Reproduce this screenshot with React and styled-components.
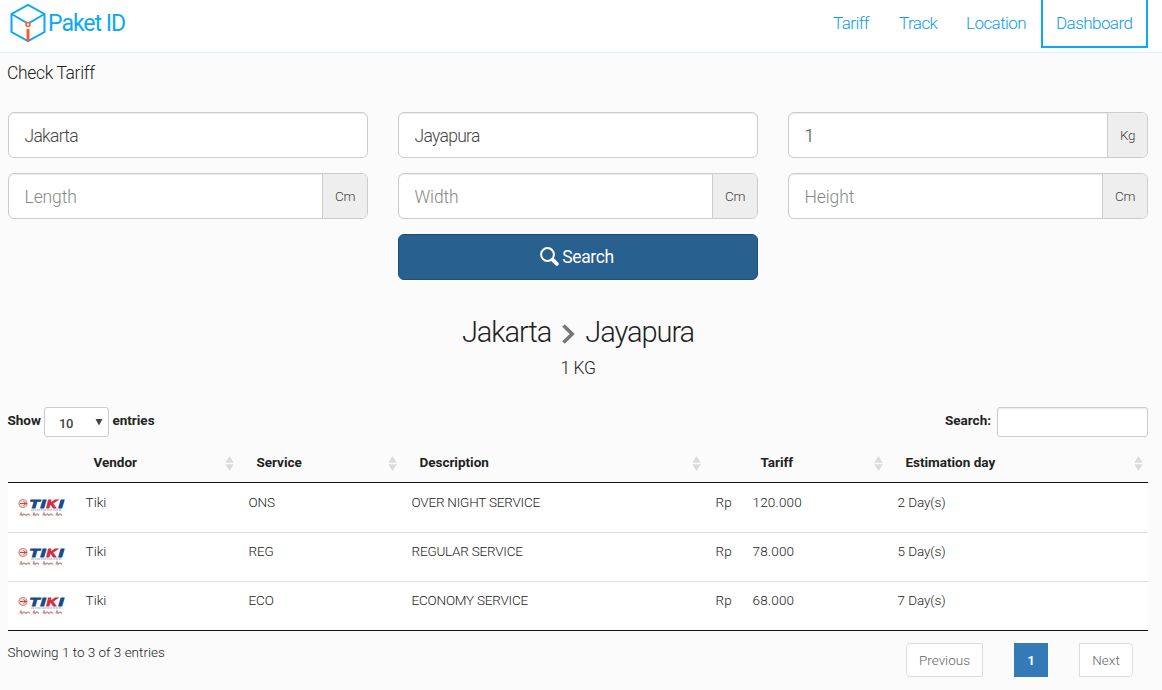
import React from "react";
import styled, { createGlobalStyle } from "styled-components";

const Global = createGlobalStyle`
  * { box-sizing: border-box; }
  body {
    margin: 0;
    background: #fbfbfb;
    color: #222;
    font: 300 13.5px/20px Roboto, "Open Sans", sans-serif;
    overflow: hidden;
  }
  button, input { font-family: inherit; }
`;

const Page = styled.div`height: 690px; overflow: hidden;`;

const Header = styled.header`
  display: flex;
  justify-content: space-between;
  height: 53px;
  padding: 0 14px 0 9px;
  background: #fff;
  border-bottom: 1px solid #dff0ff;
`;

const Brand = styled.a`
  display: flex;
  gap: 1px;
  color: #0aa8f5;
  font-size: 23px;
  font-weight: 400;
  line-height: 47px;
  letter-spacing: -1px;
  svg { margin-top: 3px; }
`;

const Nav = styled.nav`display: flex;`;

const NavLink = styled.a`
  width: ${(p) => p.$w}px;
  height: 48px;
  padding-left: ${(p) => (p.$boxed ? 13 : 15)}px;
  border: 2px solid #0aa8f5;
  border-width: ${(p) => (p.$boxed ? "0 2px 2px" : 0)};
  color: #0a9cf0;
  font-size: 17px;
  line-height: 46px;
  white-space: nowrap;
  letter-spacing: -0.55px;
`;

const Title = styled.h1`
  margin: 0;
  padding: 8px 7px 0;
  height: 59px;
  font-size: 17.5px;
  font-weight: 300;
  line-height: 24px;
  letter-spacing: -0.35px;
`;

const Form = styled.form`
  display: grid;
  grid-template-columns: repeat(3, 360px);
  gap: 15px 30px;
  padding: 0 8px;
`;

const Group = styled.label`
  display: flex;
  height: 46px;
  background: #fff;
  border: 1px solid #ccc;
  border-radius: 6px;
  box-shadow: inset 0 1px 1px rgba(0, 0, 0, 0.075);
  overflow: hidden;
`;

const Field = styled.input`
  flex: 1;
  min-width: 0;
  padding: 2px 16px 0 15.5px;
  border: 0;
  outline: 0;
  background: transparent;
  color: #444;
  font-size: 17.5px;
  font-weight: 300;
  letter-spacing: -0.7px;
  &::placeholder { color: #888; opacity: 1; letter-spacing: -0.1px; }
`;

const Addon = styled.span`
  width: ${(p) => p.$w}px;
  background: #eee;
  border-left: 1px solid #ccc;
  color: #444;
  font-size: 13.5px;
  line-height: 45px;
  letter-spacing: -0.3px;
  text-align: center;
`;

const SearchButton = styled.button`
  grid-column: 2;
  display: flex;
  align-items: center;
  justify-content: center;
  gap: 3px;
  padding: 0 8px 0 6px;
  height: 46px;
  background: #286090;
  border: 1px solid #204d74;
  border-radius: 6px;
  color: #fff;
  font-size: 17.5px;
  font-weight: 400;
  letter-spacing: -0.4px;
  svg { margin-top: -2px; }
`;

const Route = styled.h2`
  display: flex;
  justify-content: center;
  align-items: center;
  margin: 32px 8px 0;
  width: 1140px;
  height: 40px;
  font-size: 29px;
  font-weight: 300;
  line-height: 40px;
  letter-spacing: -1.05px;
  svg { margin: 4px 10px 0 11px; }
`;

const Weight = styled.p`
  margin: 4px 8px 0;
  width: 1140px;
  height: 24px;
  text-align: center;
  font-size: 17.5px;
  line-height: 24px;
  letter-spacing: -0.4px;
`;

const Controls = styled.div`
  display: flex;
  justify-content: space-between;
  margin: 27px 8px 0 7.5px;
  width: 1140.5px;
  height: 36px;
  font-weight: 700;
  line-height: 27px;
`;

const Control = styled.div`display: flex;`;

const Select = styled.span`
  display: flex;
  justify-content: space-between;
  width: 65px;
  height: 30px;
  margin: 0 3.5px 0 3px;
  padding: 1px 5px 0 14px;
  background: #fff;
  border: 1px solid #ccc;
  border-radius: 3px;
  color: #444;
  font-size: 13px;
  font-weight: 500;
  line-height: 29px;
  letter-spacing: -0.4px;
  svg { margin-top: 9px; }
`;

const Filter = styled.input`
  width: 151px;
  height: 30px;
  margin-left: 6px;
  background: #fff;
  border: 1px solid #ccc;
  border-radius: 3px;
  box-shadow: inset 0 1px 1px rgba(0, 0, 0, 0.075);
`;

const Table = styled.div`
  margin: 0 8px;
  width: 1140px;
  border-bottom: 1px solid #111;
`;

const Row = styled.div`
  display: grid;
  grid-template-columns: 68px 163px 163px 304px 37px 145px 260px;
  height: ${(p) => (p.$first ? 50 : 49)}px;
  padding-top: ${(p) => (p.$first ? 1 : 0)}px;
  background: #fff;
  border-top: 1px solid ${(p) => (p.$first ? "#111" : "#ddd")};
`;

const HeadRow = styled(Row)`
  height: 39px;
  background: transparent;
  border: 0;
  font-weight: 700;
`;

const Th = styled.div`
  display: flex;
  justify-content: space-between;
  padding: 9px 5px 0 17.4px;
  svg { margin-top: 4px; }
`;

const Td = styled.div`
  padding: 8px 0 0 9.6px;
  white-space: nowrap;
  letter-spacing: ${(p) => p.$ls || 0}px;
`;

const Footer = styled.footer`
  display: flex;
  justify-content: space-between;
  padding: 12px 29px 0 7.5px;
`;

const Info = styled.p`margin: 0; line-height: 19px;`;

const Pager = styled.div`display: flex; gap: 31px;`;

const PageLink = styled.a`
  width: ${(p) => p.$w}px;
  height: 34px;
  background: ${(p) => (p.$active ? "#337ab7" : "#fff")};
  border: 1px solid ${(p) => (p.$active ? "#337ab7" : "#ddd")};
  border-radius: ${(p) => p.$r || 0};
  color: ${(p) => (p.$active ? "#fff" : "#666")};
  font-weight: ${(p) => (p.$active ? 600 : 300)};
  line-height: 33px;
  text-align: center;
`;

const BoxLogo = () => (
  <svg width="38" height="41" viewBox="0 0 38 41" fill="none" strokeWidth="2">
    <path d="M19 1.8 35.5 11v18L19 38.2 2.5 29V11zM2.5 11 19 20.5 35.5 11" stroke="#0aa8f5" />
    <path d="M19 26v12.5" stroke="#ff5a30" strokeWidth="3" />
    <circle cx="19" cy="21.5" r="2" fill="#fff" stroke="#ff5a30" strokeWidth="1.6" />
  </svg>
);

const Glass = () => (
  <svg width="19" height="19" viewBox="0 0 19 19" fill="none" stroke="#fff">
    <circle cx="7.5" cy="7.5" r="6.4" strokeWidth="2" />
    <path d="m12.8 12.8 4 4" strokeWidth="3.8" strokeLinecap="round" />
  </svg>
);

const Chevron = () => (
  <svg width="13" height="20" viewBox="0 0 13 20" fill="none">
    <path d="m1.5 1.5 8.7 8.5-8.7 8.5" stroke="#777" strokeWidth="3.6" />
  </svg>
);

const Sort = () => (
  <svg width="9" height="15" viewBox="0 0 9 15" fill="#dcdcdc">
    <path d="M4.5 0 8.8 6.8H.2zM4.5 15 8.8 8.2H.2z" />
  </svg>
);

const TikiLogo = styled.svg`
  display: block;
  margin-top: 1px;
`;

const Tiki = () => (
  <TikiLogo width="49" height="30" viewBox="0 0 49 30">
    <circle cx="5" cy="10.5" r="4" fill="#f6dcda" stroke="#d18a88" strokeWidth="1.2" />
    <path d="M2 10.5h7M5.5 8.5l2.5 2-2.5 2" stroke="#b94d50" strokeWidth="1" fill="none" />
    <g fontFamily="Liberation Sans, sans-serif" fontSize="11" fontWeight="700" fontStyle="italic" strokeWidth=".9">
      <text x="11.5" y="14.5" textLength="10" lengthAdjust="spacingAndGlyphs" fill="#194b88" stroke="#194b88">T</text>
      <text x="22.5" y="14.5" textLength="5" lengthAdjust="spacingAndGlyphs" fill="#194b88" stroke="#194b88">I</text>
      <text x="28.5" y="14.5" textLength="10.5" lengthAdjust="spacingAndGlyphs" fill="#d62b3e" stroke="#d62b3e">K</text>
      <text x="40.5" y="14.5" textLength="5" lengthAdjust="spacingAndGlyphs" fill="#194b88" stroke="#194b88">I</text>
    </g>
    <path d="M13 17h31" stroke="#8fabc5" strokeWidth="1.2" strokeDasharray="3 .6 2 .5" />
    <path d="m2 22.4 1-2.4 1 2.4 2-1.4 2 1.4 2-1.4 2 1.4m3 0 1-2.4 1 2.4 2-1.4 2 1.4m4 0 1-2.4 1 2.4 2-1.4 2 1.4 2-1.4 2 1.4m3 0 1-2.4 1 2.4 2-1.4 2 1.4" fill="none" stroke="#c58f94" strokeWidth="1.3" />
  </TikiLogo>
);

const rows = [
  ["ONS", "OVER NIGHT SERVICE", "120.000", "2 Day(s)"],
  ["REG", "REGULAR SERVICE", "78.000", "5 Day(s)"],
  ["ECO", "ECONOMY SERVICE", "68.000", "7 Day(s)"],
];

export default function App() {
  return (
    <Page>
      <Global />
      <Header>
        <Brand><BoxLogo />Paket ID</Brand>
        <Nav>
          <NavLink $w={66}>Tariff</NavLink>
          <NavLink $w={67}>Track</NavLink>
          <NavLink $w={90}>Location</NavLink>
          <NavLink $w={107} $boxed>Dashboard</NavLink>
        </Nav>
      </Header>
      <Title>Check Tariff</Title>
      <Form>
        <Group><Field defaultValue="Jakarta" /></Group>
        <Group><Field defaultValue="Jayapura" /></Group>
        <Group><Field defaultValue="1" /><Addon $w={40}>Kg</Addon></Group>
        <Group><Field placeholder="Length" /><Addon $w={45}>Cm</Addon></Group>
        <Group><Field placeholder="Width" /><Addon $w={45}>Cm</Addon></Group>
        <Group><Field placeholder="Height" /><Addon $w={45}>Cm</Addon></Group>
        <SearchButton type="button"><Glass />Search</SearchButton>
      </Form>
      <Route>Jakarta<Chevron />Jayapura</Route>
      <Weight>1 KG</Weight>
      <Controls>
        <Control>
          Show
          <Select>10<svg width="8" height="8"><path d="M.5 1h7L4 7.5z" fill="#444" /></svg></Select>
          entries
        </Control>
        <Control>Search:<Filter /></Control>
      </Controls>
      <Table>
        <HeadRow>
          <div />
          <Th>Vendor<Sort /></Th>
          <Th>Service<Sort /></Th>
          <Th>Description<Sort /></Th>
          <div />
          <Th>Tariff<Sort /></Th>
          <Th>Estimation day<Sort /></Th>
        </HeadRow>
        {rows.map(([code, name, price, days], i) => (
          <Row key={code} $first={i === 0}>
            <Td><Tiki /></Td>
            <Td>Tiki</Td>
            <Td $ls={-0.2}>{code}</Td>
            <Td $ls={-0.22}>{name}</Td>
            <Td>Rp</Td>
            <Td $ls={0.15}>{price}</Td>
            <Td $ls={-0.1}>{days}</Td>
          </Row>
        ))}
      </Table>
      <Footer>
        <Info>Showing 1 to 3 of 3 entries</Info>
        <Pager>
          <PageLink $w={77} $r="4px 0 0 4px">Previous</PageLink>
          <PageLink $w={34} $active>1</PageLink>
          <PageLink $w={54} $r="0 4px 4px 0">Next</PageLink>
        </Pager>
      </Footer>
    </Page>
  );
}
